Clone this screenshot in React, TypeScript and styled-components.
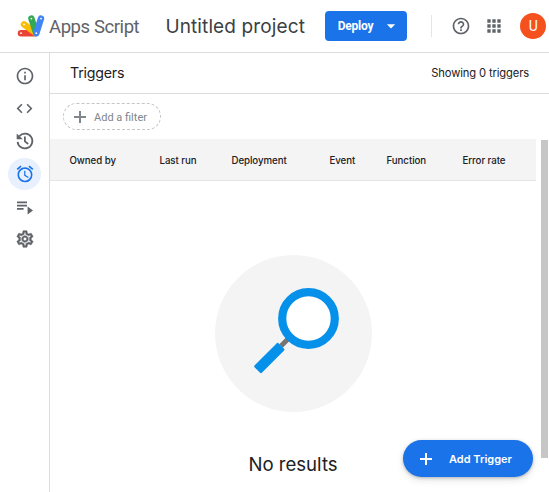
import React from 'react';
import styled, { createGlobalStyle } from 'styled-components';
import { MdOutlineInfo, MdCode, MdAlarm, MdOutlineSettings, MdHelpOutline, MdApps, MdArrowDropDown } from 'react-icons/md';

const GlobalStyle = createGlobalStyle`
  *, *::before, *::after { box-sizing: border-box; }
  html, body { margin: 0; background: #fff; overflow: hidden; }
  body { font-family: Inter, Roboto, "Liberation Sans", sans-serif; color: #202124; }
  button { font: inherit; border: 0; padding: 0; margin: 0; }
  h1, h2, p { margin: 0; font-weight: 400; }
  svg { display: block; flex: none; }
`;

const Page = styled.div`
  width: 549px;
  height: 492px;
  display: flex;
  flex-direction: column;
  overflow: hidden;
`;

const Header = styled.header`
  flex: none;
  height: 53px;
  display: flex;
  align-items: center;
  padding-left: 17px;
  border-bottom: 1px solid #dadce0;
  white-space: nowrap;
`;

const Product = styled.span`
  width: 90px;
  margin: 2px 0 0 4px;
  font: 400 18.5px/24px Roboto, sans-serif;
  letter-spacing: -0.42px;
  color: #5f6368;
`;

const ProjectName = styled.h1`
  width: 143px;
  margin: 1px 0 0 26.4px;
  font-size: 19px;
  line-height: 24px;
  letter-spacing: 0.12px;
  color: #3c4043;
`;

const DeployButton = styled.button`
  width: 82px;
  height: 30px;
  margin-left: 16.4px;
  padding: 0 6px 1px 13px;
  display: flex;
  align-items: center;
  justify-content: space-between;
  border-radius: 4px;
  background: #1a73e8;
  color: #fff;
  font: 700 12px/16px Roboto, sans-serif;
  letter-spacing: -0.25px;
`;

const Separator = styled.div`
  width: 1px;
  height: 22px;
  margin-left: 24.5px;
  background: #e3e5e8;
`;

const HeaderIcon = styled.div<{ $gap: number }>`
  margin-left: ${(p) => p.$gap}px;
  color: #5f6368;
`;

const Avatar = styled.div`
  width: 26px;
  height: 26px;
  margin-left: 16px;
  border-radius: 50%;
  background: #f4511e;
  color: #fff;
  font: 400 14px/26px Roboto, sans-serif;
  text-align: center;
`;

const Body = styled.div`
  flex: 1;
  min-height: 0;
  display: flex;
`;

const Rail = styled.nav`
  flex: none;
  width: 50px;
  padding-top: 6.5px;
  display: flex;
  flex-direction: column;
  align-items: center;
  border-right: 1px solid #dadce0;
`;

const RailItem = styled.div<{ $active?: boolean }>`
  width: 33px;
  height: 32.7px;
  display: flex;
  align-items: center;
  justify-content: center;
  border-radius: 50%;
  background: ${(p) => (p.$active ? '#e8f0fe' : 'transparent')};
  color: ${(p) => (p.$active ? '#1a73e8' : '#5f6368')};
`;

const Main = styled.main`
  flex: 1;
  min-width: 0;
  position: relative;
  display: flex;
  flex-direction: column;
`;

const TitleBar = styled.div`
  height: 41px;
  flex: none;
  display: flex;
  align-items: center;
  justify-content: space-between;
  padding: 0 20px 1px 20px;
  border-bottom: 1px solid #dadce0;
`;

const Title = styled.h2`
  font-size: 14.2px;
  line-height: 20px;
  letter-spacing: -0.2px;
`;

const Count = styled.p`
  font-size: 11.2px;
  line-height: 16px;
  letter-spacing: -0.13px;
`;

const FilterBar = styled.div`
  height: 45px;
  flex: none;
  display: flex;
  align-items: center;
  padding-left: 13px;
`;

const FilterChip = styled.button`
  width: 98px;
  height: 27px;
  padding-left: 10px;
  display: flex;
  align-items: center;
  gap: 8px;
  border: 1px dashed #c2c5c9;
  border-radius: 14px;
  background: #fff;
  color: #80868b;
  font: 400 11px/14px Roboto, sans-serif;
  white-space: nowrap;
`;

const FilterLabel = styled.span`
  padding-top: 2px;
`;

const Scroller = styled.div`
  flex: 1;
  min-height: 0;
  display: flex;
  gap: 5px;
`;

const Content = styled.div`
  width: 486px;
`;

const Columns = styled.div`
  height: 42px;
  display: grid;
  grid-template-columns: 90px 72px 98px 57px 76px 1fr;
  align-items: center;
  padding: 1.5px 0 0 19.5px;
  border-bottom: 1px solid #e4e5e7;
  background: #f4f4f4;
  font-size: 9.7px;
  font-weight: 500;
  letter-spacing: -0.06px;
  white-space: nowrap;
`;

const Empty = styled.div`
  display: flex;
  flex-direction: column;
  align-items: center;
  padding-top: 74px;
`;

const Disc = styled.div`
  width: 157px;
  height: 157px;
  border-radius: 50%;
  background: #f4f4f4;
`;

const EmptyText = styled.p`
  margin-top: 40px;
  font-size: 18.6px;
  line-height: 24px;
`;

const Thumb = styled.div`
  width: 7px;
  height: 318px;
  margin-top: 1px;
  background: #c6c6c6;
`;

const AddButton = styled.button`
  position: absolute;
  right: 16px;
  bottom: 15px;
  width: 130px;
  height: 37px;
  padding-left: 17px;
  display: flex;
  align-items: center;
  gap: 17px;
  border-radius: 19px;
  background: #1a73e8;
  color: #fff;
  font-size: 11px;
  font-weight: 600;
  white-space: nowrap;
  box-shadow: 0 1px 3px rgba(60, 64, 67, 0.3), 0 3px 7px rgba(60, 64, 67, 0.15);
`;

const Logo = () => (
  <svg width="28" height="24" viewBox="0 0 28 24">
    <g fill="none" strokeWidth="6.4" strokeLinecap="round">
      <path d="M4 19.2H18" stroke="#ea4335" />
      <path d="M7 10.4L18.6 18.8" stroke="#fbbc04" />
      <path d="M14.4 4.6L19 18.4" stroke="#34a853" />
      <path d="M24 4.6L19.3 19.2" stroke="#4285f4" />
    </g>
    <g fill="#fff">
      <circle cx="4" cy="19.2" r="0.9" />
      <circle cx="7" cy="10.4" r="0.9" />
      <circle cx="14.4" cy="4.6" r="0.9" />
      <circle cx="24" cy="4.6" r="0.9" />
      <circle cx="19.3" cy="19.2" r="0.9" />
    </g>
  </svg>
);

const HistoryIcon = () => (
  <svg width="20" height="20" viewBox="0 0 20 20" fill="none" stroke="currentColor" strokeWidth="1.8">
    <path d="M2.6 10.8A7.4 7.4 0 1 0 4.4 5.1" />
    <path d="M1.7 2.6L7.8 8.2H1.7Z" fill="currentColor" stroke="none" />
    <path d="M9.9 5.5V10.4L13.2 13" />
  </svg>
);

const ExecutionsIcon = () => (
  <svg width="20" height="20" viewBox="0 0 20 20" fill="currentColor">
    <path d="M2 4.5h10v1.7H2zM2 7.8h10v1.7H2zM2 11.1h6.6v1.7H2zM12.6 9.6L18 13.6L12.6 17.6z" />
  </svg>
);

const SettingsIcon = styled(MdOutlineSettings)`
  path:not([fill='none']) {
    stroke: currentColor;
    stroke-width: 0.6px;
  }
`;

const Plus = ({ size, weight }: { size: number; weight: number }) => (
  <svg width={size} height={size} viewBox={`0 0 ${size} ${size}`} stroke="currentColor" strokeWidth={weight}>
    <path d={`M${size / 2} 0V${size}M0 ${size / 2}H${size}`} />
  </svg>
);

const Magnifier = () => (
  <svg width="157" height="157" viewBox="0 0 157 157">
    <path d="M66 91L75 82" stroke="#757575" strokeWidth="5" />
    <rect x="-17" y="-5.2" width="34" height="10.4" rx="1.6" fill="#0590ea" transform="translate(54.3 103) rotate(-45)" />
    <circle cx="93.5" cy="63.5" r="26.3" fill="#fff" stroke="#0590ea" strokeWidth="8.2" />
  </svg>
);

const columns = ['Owned by', 'Last run', 'Deployment', 'Event', 'Function', 'Error rate'];

export default function App() {
  return (
    <>
      <GlobalStyle />
      <Page>
        <Header>
          <Logo />
          <Product>Apps Script</Product>
          <ProjectName>Untitled project</ProjectName>
          <DeployButton>
            Deploy
            <MdArrowDropDown size={20} />
          </DeployButton>
          <Separator />
          <HeaderIcon $gap={19}><MdHelpOutline size={20} /></HeaderIcon>
          <HeaderIcon $gap={13}><MdApps size={20} /></HeaderIcon>
          <Avatar>U</Avatar>
        </Header>
        <Body>
          <Rail>
            <RailItem><MdOutlineInfo size={20} /></RailItem>
            <RailItem><MdCode size={19} /></RailItem>
            <RailItem><HistoryIcon /></RailItem>
            <RailItem $active><MdAlarm size={20} /></RailItem>
            <RailItem><ExecutionsIcon /></RailItem>
            <RailItem><SettingsIcon size={20} /></RailItem>
          </Rail>
          <Main>
            <TitleBar>
              <Title>Triggers</Title>
              <Count>Showing 0 triggers</Count>
            </TitleBar>
            <FilterBar>
              <FilterChip>
                <Plus size={12} weight={2} />
                <FilterLabel>Add a filter</FilterLabel>
              </FilterChip>
            </FilterBar>
            <Scroller>
              <Content>
                <Columns>
                  {columns.map((name) => <span key={name}>{name}</span>)}
                </Columns>
                <Empty>
                  <Disc><Magnifier /></Disc>
                  <EmptyText>No results</EmptyText>
                </Empty>
              </Content>
              <Thumb />
            </Scroller>
            <AddButton>
              <Plus size={12} weight={2} />
              Add Trigger
            </AddButton>
          </Main>
        </Body>
      </Page>
    </>
  );
}
